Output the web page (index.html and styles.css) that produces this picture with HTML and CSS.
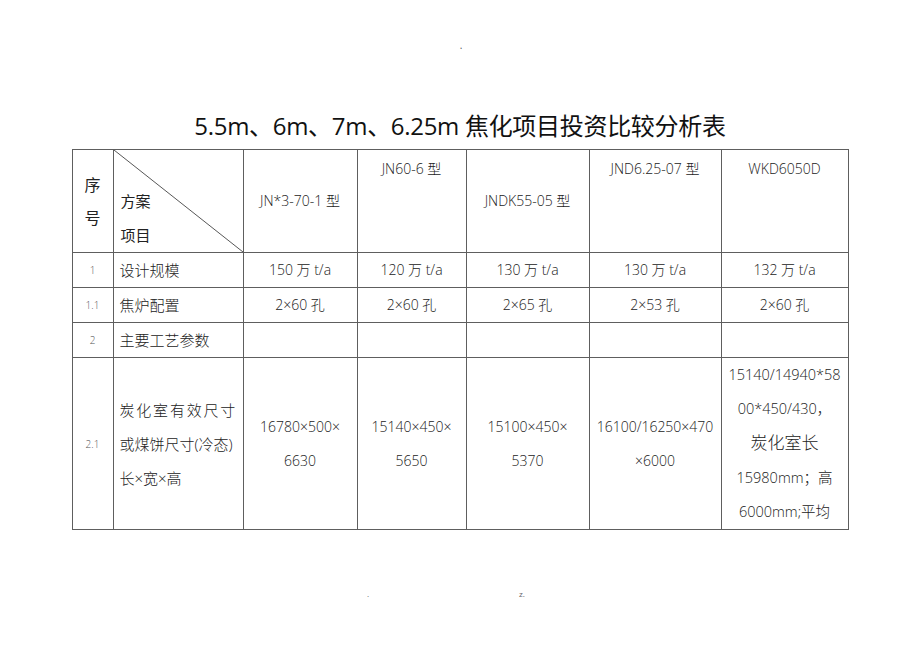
FILE: index.html
```html
<!DOCTYPE html>
<html lang="zh">
<head>
<meta charset="utf-8">
<link rel="stylesheet" href="styles.css">
</head>
<body>
<div class="page">
  <div class="dot-row"><span class="dot">.</span></div>
  <h1 class="title">5.5m、6m、7m、6.25m 焦化项目投资比较分析表</h1>
  <table class="grid">
    <colgroup>
      <col class="c1"><col class="c2"><col class="c3"><col class="c4"><col class="c5"><col class="c6"><col class="c7">
    </colgroup>
    <tr class="r-head">
      <td class="seq-head">序<br>号</td>
      <td class="diag">
        <svg class="diag-line" viewBox="0 0 130 103" preserveAspectRatio="none"><line x1="0" y1="0" x2="130" y2="103" stroke="#555" stroke-width="1"/></svg>
        <div class="diag-text">方案<br>项目</div>
      </td>
      <td class="mid">JN*3-70-1 型</td>
      <td class="top">JN60-6 型</td>
      <td class="mid">JNDK55-05 型</td>
      <td class="top">JND6.25-07 型</td>
      <td class="top">WKD6050D</td>
    </tr>
    <tr class="r1">
      <td class="seq">1</td><td class="name">设计规模</td>
      <td>150 万 t/a</td><td>120 万 t/a</td><td>130 万 t/a</td><td>130 万 t/a</td><td>132 万 t/a</td>
    </tr>
    <tr class="r2">
      <td class="seq">1.1</td><td class="name">焦炉配置</td>
      <td>2×60 孔</td><td>2×60 孔</td><td>2×65 孔</td><td>2×53 孔</td><td>2×60 孔</td>
    </tr>
    <tr class="r3">
      <td class="seq">2</td><td class="name">主要工艺参数</td>
      <td></td><td></td><td></td><td></td><td></td>
    </tr>
    <tr class="r4">
      <td class="seq">2.1</td>
      <td class="name multi"><span class="spread">炭化室有效尺寸</span><br>或煤饼尺寸(冷态)<br>长×宽×高</td>
      <td class="multi">16780×500×<br>6630</td>
      <td class="multi">15140×450×<br>5650</td>
      <td class="multi">15100×450×<br>5370</td>
      <td class="multi">16100/16250×470<br>×6000</td>
      <td class="multi last">15140/14940*58<br>00*450/430，<br><span class="big">炭化室长</span><br>15980mm；高<br>6000mm;平均</td>
    </tr>
  </table>
  <div class="foot"><span class="dot">.</span><span class="z">z.</span></div>
</div>
</body>
</html>
```

FILE: styles.css
```css
html, body {
  margin: 0;
  padding: 0;
  background: #fff;
}
body {
  font-family: "Open Sans", "Noto Sans CJK SC", sans-serif;
  color: #222;
}
.page {
  width: 920px;
  height: 651px;
  padding-top: 40px;
  box-sizing: border-box;
}
.dot-row {
  height: 20px;
  display: flex;
  justify-content: center;
  font-size: 10px;
  line-height: 10px;
  color: #555;
}
.dot-row .dot {
  margin-left: 2px;
}
.title {
  margin: 47px 0 0 0;
  height: 38px;
  font-size: 24px;
  line-height: 38px;
  font-weight: 400;
  text-align: center;
  color: #111;
  letter-spacing: -0.3px;
}
.grid {
  margin: 4px auto 0 auto;
  border-collapse: collapse;
  table-layout: fixed;
  width: 776px;
  font-size: 14px;
  font-weight: 300;
}
.c1 { width: 41px; }
.c2 { width: 130px; }
.c3 { width: 114px; }
.c4 { width: 109px; }
.c5 { width: 123px; }
.c6 { width: 132px; }
.c7 { width: 127px; }
.grid td {
  border: 1px solid #5e5e5e;
  padding: 0 2px;
  text-align: center;
  vertical-align: middle;
  line-height: 34px;
  white-space: nowrap;
}
.r-head { height: 103px; }
.r1 { height: 35px; }
.r2 { height: 34px; }
.r3 { height: 35px; }
.r4 { height: 171px; }
.grid td.top {
  vertical-align: top;
  padding-top: 2px;
}
.grid td.seq-head {
  font-size: 16px;
  font-weight: 400;
  line-height: 33px;
  padding-top: 2px;
}
.grid td.diag {
  position: relative;
  padding: 0;
  text-align: left;
}
.diag-line {
  position: absolute;
  left: 0;
  top: 0;
  width: 100%;
  height: 100%;
}
.diag-text {
  font-size: 15px;
  font-weight: 400;
  line-height: 34px;
  padding: 34px 0 0 7px;
}
.grid td.seq {
  font-size: 10px;
  color: #555;
}
.grid td.name {
  text-align: left;
  padding-left: 6px;
  font-size: 15px;
}
.grid td.name.multi {
  font-size: 15px;
}
.spread {
  letter-spacing: 1.8px;
}
.grid td.last {
  padding: 0;
  font-size: 14.5px;
}
.big {
  font-size: 17px;
  font-weight: 300;
}
.foot {
  display: flex;
  gap: 150px;
  margin-top: 58px;
  padding-left: 367px;
  font-size: 8px;
  color: #666;
}
```
